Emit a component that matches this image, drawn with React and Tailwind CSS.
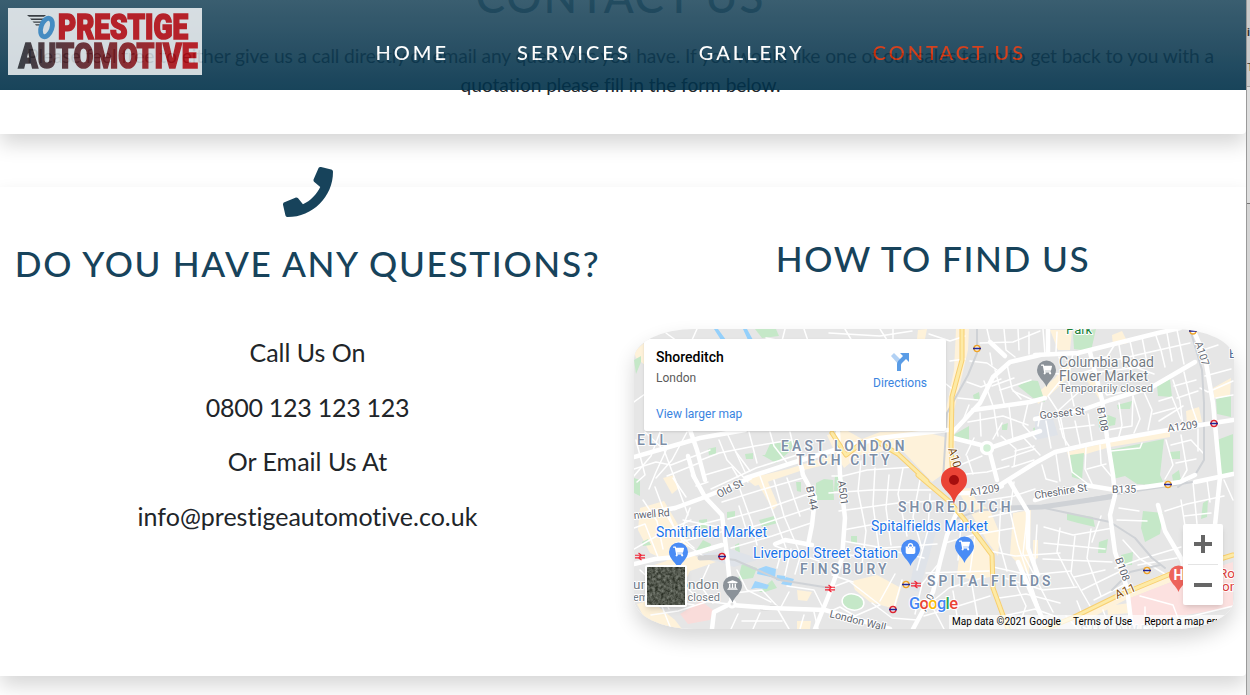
import { FaPhone, FaShoppingCart, FaShoppingBag, FaUniversity } from "react-icons/fa";

const parks = [
  "765,455 770,444 800,440 788,453 776,463 762,455", "708,449 716,447 716,454 709,455", "745,454 753,453 753,459 746,459",
  "755,329 776,329 779,336 762,338", "634,360 641,356 641,362 636,374", "1018,386 1028,380 1038,381 1045,402 1033,398",
  "973,395 979,392 980,399 974,400", "955,434 969,426 969,440 954,437", "1002,425 1008,423 1007,430 1002,430", "1033,428 1040,426 1040,437 1034,434",
  "1073,334 1096,329 1091,351 1074,349", "1157,386 1170,379 1172,397 1158,396", "1216,399 1231,395 1231,417 1217,414",
  "1117,405 1132,401 1130,409 1118,409", "1098,419 1108,415 1116,418 1115,425 1099,428", "1070,455 1084,453 1082,480 1072,477",
  "1109,450 1164,439 1160,475 1165,486 1137,484 1125,476 1113,479", "1170,452 1180,451 1180,459 1170,459", "1172,475 1179,470 1181,481 1173,481",
  "1217,440 1233,434 1233,474 1221,475", "1143,511 1163,513 1160,534 1145,542 1141,528", "1203,503 1208,500 1207,517 1201,519",
  "1067,513 1093,517 1095,527 1078,523 1067,520", "1099,542 1108,539 1106,553 1098,553", "1121,555 1133,552 1132,565 1122,565",
  "816,483 824,479 833,480 834,500 816,500", "796,482 801,482 801,492 797,491", "695,552 703,540 711,544 709,552 697,553",
  "699,520 707,519 707,529 699,528", "727,512 735,511 735,517 727,518", "738,580 742,563 757,568 753,578", "759,520 774,516 778,523 762,527",
  "759,592 772,580 777,588 765,592", "851,536 857,536 857,543 851,543", "835,475 843,478 841,491 834,491", "634,478 640,480 640,496 634,493",
  "642,542 648,539 651,545 643,546", "735,545 739,543 740,553 735,550",
];
const shops = [
  "634,352 645,342 645,365 636,358", "640,508 664,501 680,528 690,545 670,562 650,553 638,530", "648,567 688,554 716,562 690,571 682,588 650,590",
  "663,478 674,475 679,488 672,494", "746,479 788,469 830,456 832,463 800,471 755,486", "753,475 765,475 778,505 773,510",
  "827,435 846,430 862,439 880,432 921,431 948,438 949,470 932,482 899,447 876,453 860,455 844,468 836,455",
  "956,329 969,329 968,350 954,410 955,478 947,482 946,410 954,370", "918,330 927,329 925,339 917,339",
  "1050,330 1072,330 1070,350 1058,350", "1035,395 1055,378 1070,360 1071,375 1050,395 1038,404", "1067,452 1105,443 1170,431 1170,437 1110,447 1069,459",
  "1186,411 1199,407 1202,422 1187,425", "1213,388 1231,378 1230,397 1214,398", "1083,376 1098,376 1100,400 1090,385",
  "852,581 877,575 901,588 895,609 870,602 855,590", "961,540 983,539 991,558 990,577 972,580 957,575", "1013,513 1031,510 1029,575 1010,555",
  "957,489 970,488 977,502 990,510 1000,534 998,556 987,541 976,522", "1074,618 1120,592 1173,570 1174,581 1125,600 1082,623", "1107,606 1130,603 1130,613 1108,615",
  "1033,540 1038,540 1038,558 1033,560", "637,604 650,600 675,620 682,629 650,629", "797,590 812,592 807,601 798,600", "797,621 811,621 810,629 797,629",
  "1112,335 1122,331 1128,343 1113,346",
];
const minor = [
  "634,402 645,394", "636,440 645,475 637,482", "645,432 664,450 676,482 688,515", "660,432 651,456 634,476", "634,469 656,462 671,465 710,450", "668,446 656,472 649,489",
  "687,432 672,460 656,478", "667,476 699,463", "705,475 732,467 738,477", "719,440 727,460 748,482", "727,433 745,472", "749,432 757,463", "701,460 719,453 755,446 791,440",
  "770,432 774,446 788,464", "790,432 793,445 804,470", "736,452 750,471", "711,489 756,468 800,454", "722,502 764,489 803,478", "728,519 765,509 811,493",
  "728,534 762,524 811,508", "731,548 772,536 811,523", "737,481 752,523 757,545", "774,480 784,516 799,551", "787,478 800,516", "760,476 786,548",
  "739,506 746,529", "696,486 708,482", "673,478 686,497", "655,487 664,511 683,542 706,558", "643,500 657,521 663,549", "634,528 645,524 658,557",
  "634,549 662,533 691,520", "668,513 676,532 694,548", "690,508 682,529", "683,520 723,528", "671,532 722,519", "676,543 725,531", "640,570 656,585 669,609",
  "651,615 678,611 706,602", "661,604 671,629", "650,590 676,602 694,605", "687,588 701,601 730,604", "709,565 700,585 713,603", "737,570 747,590 771,602", "734,593 762,590 778,607",
  "775,546 819,561", "781,553 777,568", "791,549 785,575", "801,554 795,574", "787,586 814,590 823,608", "789,592 781,607", "778,610 789,629", "760,613 753,629",
  "738,614 731,629", "742,621 782,621", "804,615 800,629", "814,612 818,629", "832,476 843,476 867,470 914,467", "829,493 872,490 931,490", "839,511 898,503 935,501", "843,530 886,522 917,525",
  "843,541 884,548 937,544", "844,554 867,558 898,552 924,558", "832,575 853,582", "861,461 858,491 866,531 861,573", "875,468 873,505 879,549", "889,475 886,508 891,545",
  "903,468 898,494 907,536", "920,480 913,517 922,549", "930,494 928,530 917,570", "830,588 849,581 880,605 855,616 840,607 831,611", "872,603 892,618 917,620",
  "895,574 880,601", "902,580 893,611", "940,562 922,584 915,614", "929,604 949,588 985,577", "924,616 955,607 990,596", "932,606 944,629", "953,591 957,616", "972,585 978,620",
  "926,573 955,572 989,571", "945,543 973,535 1014,528", "962,514 958,560", "976,529 970,572", "988,500 1014,496 1035,489", "989,517 1030,508", "1001,499 999,542 1007,571",
  "1014,482 1010,511 1018,545 1040,611", "1028,508 1023,554 1037,580", "1037,525 1034,575 1053,612", "990,551 1015,556 1060,553", "993,567 1029,575 1071,571",
  "1005,578 1043,590 1077,587", "999,598 1026,594 1060,603", "999,617 1035,609 1057,617", "1014,580 1026,606 1018,629", "1044,527 1073,535 1113,528",
  "1044,543 1105,549", "1043,559 1112,562", "1060,528 1057,552 1074,586", "1075,536 1071,573 1090,606", "1091,529 1087,558 1101,596", "1101,516 1092,542",
  "1074,577 1105,570", "1082,590 1121,571", "1094,600 1124,585", "1119,508 1139,511", "1117,520 1147,521", "1123,540 1140,559 1165,574", "1115,568 1141,559 1181,547",
  "1138,565 1177,558", "1181,500 1185,526", "1193,482 1197,524", "1207,480 1210,502", "1165,511 1187,504 1224,496", "1184,516 1211,513", "1224,480 1233,500",
  "1140,596 1173,605 1182,629", "1103,610 1110,629", "1077,601 1088,629", "1066,616 1078,629", "1145,607 1145,629", "1180,619 1233,606",
  "980,343 1013,342 1040,331", "987,329 990,342", "1004,329 1006,350 1015,357", "1018,329 1019,350", "1029,332 1029,354", "1043,329 1045,355", "1057,332 1056,352",
  "970,361 987,363 997,370", "990,353 992,365", "967,382 981,387 1001,379", "958,398 978,400", "969,405 962,423", "984,381 993,406", "995,370 1005,407", "1007,364 1012,389 1021,399",
  "992,386 1014,378", "1000,390 1031,380", "1013,391 1035,401", "980,413 981,436", "994,409 998,436", "1009,406 1013,440", "1028,403 1023,425 1036,439", "1042,403 1038,426",
  "968,422 1003,416 1028,425", "966,455 974,438", "960,465 982,456", "956,475 987,472 1009,466", "967,456 973,474", "993,439 1002,423", "1001,436 1016,449 1014,466",
  "1022,436 1040,455", "1015,451 1034,446", "1002,460 1035,449", "1012,467 1034,460", "1048,373 1074,375 1092,370", "1059,357 1065,375 1048,396 1061,416",
  "1073,353 1068,378 1074,406", "1081,390 1059,410 1066,445", "1087,359 1107,357 1115,344", "1091,373 1140,367", "1097,383 1107,395 1128,391",
  "1119,345 1122,362 1154,374", "1130,341 1135,364", "1142,337 1147,363", "1155,333 1161,350 1165,367", "1167,333 1172,361", "1177,330 1184,364", "1115,360 1159,350 1190,343",
  "1075,421 1080,444", "1088,414 1092,440", "1058,417 1063,437 1069,446", "1046,421 1051,448", "1060,429 1094,425", "1101,431 1132,426 1133,396", "1119,403 1122,425 1118,440",
  "1133,396 1140,419 1134,433", "1144,392 1152,410 1148,430", "1159,401 1172,397 1181,419", "1159,421 1183,406", "1173,380 1180,401 1183,427", "1184,372 1192,407 1198,424",
  "1153,414 1175,408", "1174,386 1196,380", "1177,398 1198,391", "1200,388 1208,392 1233,381", "1205,376 1231,369", "1216,398 1233,395", "1203,350 1218,345",
  "1042,465 1046,479 1057,482", "1056,454 1060,481", "1068,450 1072,472 1088,484", "1086,447 1085,469 1094,488", "1100,445 1101,464 1112,477", "1087,469 1106,464",
  "1111,451 1140,448 1142,443", "1166,440 1173,465 1165,479", "1171,445 1191,440 1203,453", "1176,463 1196,459", "1181,435 1187,470 1180,482", "1198,429 1198,451",
  "640,336 655,349", "666,333 677,341", "697,329 692,340", "785,329 782,341 766,338", "804,329 808,341", "829,333 880,336 912,331", "845,329 852,341", "880,329 887,340",
  "893,329 893,341", "929,334 950,341 965,336", "950,361 965,359", "946,384 955,391",
];
const major = [
  "690,430 697,450 705,480", "634,457 669,447 700,438 745,430", "746,478 792,463 838,449 880,438 948,430",
  "675,508 705,497 750,478", "634,517 652,512 675,508", "693,475 705,497 722,515 727,555 732,605", "688,456 694,477",
  "803,475 815,497 812,525 808,545", "796,442 803,475", "838,432 840,475 845,518 842,558 830,592 815,629", "732,605 770,608 825,610 890,629",
  "732,603 714,612 712,629", "634,564 655,559 686,556 722,545", "1040,355 1010,362 993,377 980,403 953,432", "973,410 1030,402 1045,398",
  "953,438 985,446", "987,449 1040,431", "990,453 997,480", "1035,355 1078,353 1118,343 1158,333 1180,328", "1193,329 1205,357 1213,403 1220,477 1215,525",
  "1035,419 1085,409 1110,400 1152,387 1195,362", "1000,485 1035,463 1055,452 1095,443 1168,430 1233,420", "1090,352 1102,400 1107,437 1113,475 1115,495 1110,515 1115,552 1127,588 1132,629",
  "1035,500 1085,485 1115,490 1145,487 1180,482 1195,475", "1158,505 1165,531 1182,560 1188,590", "957,512 947,535 940,562 933,592 913,629", "957,493 980,493 1002,486",
  "1010,482 1028,512 1028,548 1038,575", "1048,329 1048,354", "1233,474 1195,482", "990,342 1005,356", "1018,562 1045,625 1049,629", "775,544 785,540 812,545",
];

function Lines({ list, color, width }) {
  return (
    <g fill="none" stroke={color} strokeWidth={width} strokeLinejoin="round" strokeLinecap="round">
      {list.map((p) => <polyline key={p} points={p} />)}
    </g>
  );
}

function Label({ x, y, children, size = 12, color = "#5f6670", spacing = 0, weight = 400, rotate = 0, length, halo = "#ffffff" }) {
  return (
    <text x={x} y={y} fontSize={size} fill={color} fontWeight={weight} letterSpacing={spacing} textLength={length}
      transform={`rotate(${rotate} ${x} ${y})`} stroke={halo} strokeWidth="2" strokeLinejoin="round" paintOrder="stroke">
      {children}
    </text>
  );
}

function Pin({ x, y, color, icon: Icon, letter }) {
  return (
    <g>
      <path d={`M${x} ${y + 17}C${x - 2} ${y + 11} ${x - 9.5} ${y + 7} ${x - 9.5} ${y}A9.5 9.5 0 1 1 ${x + 9.5} ${y}C${x + 9.5} ${y + 7} ${x + 2} ${y + 11} ${x} ${y + 17}Z`} fill={color} />
      {Icon && <Icon x={x - 5.5} y={y - 6} size={11} color="#fff" />}
      {letter && <text x={x - 5} y={y + 5} fontSize="14" fontWeight="700" fill="#fff">{letter}</text>}
    </g>
  );
}

function Tube({ x, y, ring = "#dc2430" }) {
  return (
    <g>
      <circle cx={x} cy={y} r="3" fill="#fff" stroke={ring} strokeWidth="1.4" />
      <rect x={x - 4} y={y - 0.8} width="8" height="1.6" fill="#25258f" />
    </g>
  );
}

function Rail({ x, y }) {
  return <path d={`M${x - 5} ${y - 1.3}h10M${x - 5} ${y + 1.4}h10M${x - 1.5} ${y - 3.5}l3 2.2l-3 2.7l3 2.1`} stroke="#ef2436" strokeWidth="1.1" fill="none" />;
}

function StreetMap() {
  return (
    <svg className="block h-full w-full" viewBox="634 329 600 300" fontFamily="Roboto, sans-serif" aria-label="Map of Shoreditch">
      <rect x="634" y="329" width="600" height="300" fill="#e6e6e6" />
      {shops.map((p) => <polygon key={p} points={p} fill="#fef2da" />)}
      {parks.map((p) => <polygon key={p} points={p} fill="#c5e8c8" />)}
      <path d="M1035 415l18 4 5 16-23 5zM700 555l30-6 30 10-26 8zM918 545l12-15 6 2-17 60-10-3z" fill="#dfe3e9" />
      <polygon points="1130,598 1174,581 1233,562 1233,607 1180,616 1134,629" fill="#fce1e0" />
      <polygon points="680,614 701,601 713,610 710,620 688,624" fill="#f9dcda" />
      <ellipse cx="853" cy="602" rx="11" ry="8" fill="#c5e8c8" stroke="#fff" strokeWidth="1.5" transform="rotate(12 853 602)" />
      <path d="M714 329l4 0 8 11h-5zM743 329h4l6 11h-5z" fill="#94d0fb" />
      <path d="M758 569l8-3 10 3-1 9-18-4zM777 575l8 1v6l-9-2zM786 577l8 2-3 7-10-2zM751 589l4-8 14 4-2 4-11-1z" fill="#9fd4fb" />
      <Lines list={minor} color="#ffffff" width={1.5} />
      <Lines list={["977,329 977,353 968,375 947,413 943,480", "1190,329 1202,370 1204,403 1204,460 1195,475 1178,487", "705,556 735,560 780,580 830,588", "955,519 980,510 1040,508 1110,495 1175,485 1233,475", "1035,506 1110,522 1135,538 1152,558 1165,568", "1112,590 1130,572 1160,565"]} color="#cfd2d6" width={2} />
      <Lines list={["1008,508 1042,507 1110,497"]} color="#cfd2d6" width={5} />
      <Lines list={["700,558 722,557", "762,608 776,608"]} color="#d3d3d3" width={5} />
      <Lines list={major} color="#ffffff" width={4.5} />
      <Lines list={["962,329 962,360 952,397 951,447 954,492", "918,475 950,502 977,535 992,555 993,588 1008,629", "876,441 898,454 927,481", "832,433 846,455 863,442", "1045,629 1072,618 1115,597 1168,575 1233,555"]} color="#f8cf70" width={5} />
      <Lines list={["962,329 962,360 952,397 951,447 954,492", "918,475 950,502 977,535 992,555 993,588 1008,629", "876,441 898,454 927,481", "832,433 846,455 863,442", "1045,629 1072,618 1115,597 1168,575 1233,555"]} color="#fdeaa6" width={3} />
      <circle cx="987" cy="448" r="5.5" fill="#d2efd6" stroke="#fff" strokeWidth="3.5" />
      <circle cx="732" cy="604" r="3" fill="#e4e4e4" stroke="#fff" strokeWidth="3" />

      <Label x={637} y={445} size={14} weight={500} color="#7d8ea6" length={30}>ELL</Label>
      <Label x={781} y={451} size={13.8} weight={600} color="#7d8ea6" length={123.5}>EAST LONDON</Label>
      <Label x={796} y={465} size={13.8} weight={600} color="#7d8ea6" length={93.5}>TECH CITY</Label>
      <Label x={898} y={512} size={13.8} weight={600} color="#7d8ea6" length={112.5}>SHOREDITCH</Label>
      <Label x={800} y={574} size={13.8} weight={600} color="#7d8ea6" length={86.5}>FINSBURY</Label>
      <Label x={927} y={586} size={13.8} weight={600} color="#7d8ea6" length={123.5}>SPITALFIELDS</Label>
      <Label x={1080} y={634} size={13} weight={500} color="#aab3c2" length={88}>SHADWELL</Label>
      <Label x={1059} y={367} size={14} color="#747b83" length={95}>Columbia Road</Label>
      <Label x={1059} y={381} size={14} color="#747b83" length={89}>Flower Market</Label>
      <Label x={1059} y={391.5} size={11} color="#747b83" length={94}>Temporarily closed</Label>
      <Label x={1066} y={333.5} size={13} color="#188038">Park</Label>
      <Label x={656} y={537} size={14} color="#1a73e8" length={111}>Smithfield Market</Label>
      <Label x={753} y={558} size={14} color="#1a73e8" length={145}>Liverpool Street Station</Label>
      <Label x={871} y={531} size={14} color="#1a73e8" length={117}>Spitalfields Market</Label>
      <Label x={633} y={589} size={13.5} color="#747b83" length={86}>um of London</Label>
      <Label x={633} y={601} size={11} color="#747b83" length={87}>emporarily closed</Label>
      <Label x={719} y={498} size={10.5} rotate={-27}>Old St</Label>
      <Label x={634} y={519} size={10.5} rotate={-5} length={36}>nwell Rd</Label>
      <Label x={806} y={487} size={10.5} rotate={78}>B144</Label>
      <Label x={838} y={481} size={10.5} rotate={83}>A501</Label>
      <Label x={829} y={617} size={10.5} rotate={14}>London Wall</Label>
      <Label x={948} y={449} size={11.5} rotate={73} color="#754b12">A10</Label>
      <Label x={926} y={612} size={10} rotate={-62}>A10</Label>
      <Label x={970} y={496} size={10.5} rotate={-9}>A1209</Label>
      <Label x={1035} y={499} size={10.5} rotate={-9}>Cheshire St</Label>
      <Label x={1112} y={493} size={10.5} rotate={-1}>B135</Label>
      <Label x={1040} y={419} size={10.5} rotate={-6}>Gosset St</Label>
      <Label x={1097} y={408} size={10.5} rotate={80}>B108</Label>
      <Label x={1115} y={559} size={10.5} rotate={70}>B108</Label>
      <Label x={1168} y={432} size={10.5} rotate={-8}>A1209</Label>
      <Label x={1195} y={343} size={10.5} rotate={72}>A107</Label>
      <Label x={1117} y={599} size={12} rotate={-23} color="#84500f">A11</Label>
      <Label x={1229} y={358} size={13} color="#53709c">E</Label>
      <Label x={1219} y={578} size={13.5} color="#dd413c">Royal</Label>
      <Label x={1222} y={591} size={13.5} color="#dd413c">ondon</Label>

      <Tube x={977} y={348.5} ring="#eea52c" /><Tube x={1193} y={331} ring="#eea52c" /><Tube x={1214} y={423.5} />
      <Tube x={1168} y={484.5} ring="#eea52c" /><Tube x={1147} y={570.5} ring="#eea52c" /><Tube x={722} y={556.5} />
      <Tube x={906} y={584.5} ring="#eea52c" /><Tube x={893} y={609.5} />
      <Rail x={640} y={556.5} /><Rail x={830} y={588.5} /><Rail x={916} y={584.5} />
      <Pin x={678.5} y={552} color="#4a8cf5" icon={FaShoppingCart} />
      <Pin x={910.5} y={549} color="#4a8cf5" icon={FaShoppingBag} />
      <Pin x={964.5} y={546} color="#4a8cf5" icon={FaShoppingCart} />
      <Pin x={1046.5} y={370} color="#8b9299" icon={FaShoppingCart} />
      <Pin x={732.5} y={585.5} color="#8b9299" icon={FaUniversity} />
      <Pin x={1178.5} y={575} color="#ed635b" letter="H" />
      <path d="M954 504.5C952 491 941 491 941 480a13 13 0 0 1 26 0C967 491 956 491 954 504.5Z" fill="#ea4335" />
      <circle cx="954" cy="480" r="5" fill="#a50e0e" />
      <g fontSize="16.5" fontWeight="500" fontFamily="Roboto" stroke="#fff" strokeWidth="2" paintOrder="stroke">
        <text x="909" y="609" textLength="49">
          <tspan fill="#4285f4">G</tspan><tspan fill="#ea4335">o</tspan><tspan fill="#fbbc05">o</tspan><tspan fill="#4285f4">g</tspan><tspan fill="#34a853">l</tspan><tspan fill="#ea4335">e</tspan>
        </text>
      </g>
    </svg>
  );
}

function Logo() {
  return (
    <svg className="block h-[67px] w-[194px]" viewBox="8 8 194 67" aria-label="Prestige Automotive">
      <defs>
        <linearGradient id="word" gradientUnits="userSpaceOnUse" x1="18" x2="185" y1="0" y2="0">
          <stop offset="0" stopColor="#262c33" /><stop offset="1" stopColor="#ae0b13" />
        </linearGradient>
      </defs>
      <rect x="8" y="8" width="194" height="67" fill="#fff" fillOpacity="0.8" />
      <path d="M27 15h19l-2 1.800H29zM30 18.500h14l-1 1.500H31.500zM32.500 21.500h9l-.7 1.300h-7zM35 24.300h5l-.5 1.200h-3.500z" fill="#252b31" />
      <ellipse cx="46.500" cy="27.500" rx="5.400" ry="9.600" transform="rotate(19 46.500 27.500)" fill="none" stroke="#3180bc" strokeWidth="4.800" />
      <g fontFamily="Roboto, sans-serif" fontWeight="900" strokeWidth="1.700" strokeLinejoin="miter">
        <text x="58" y="39" fontSize="34.500" fill="#ae0b13" stroke="#ae0b13" textLength="130" lengthAdjust="spacingAndGlyphs">PRESTIGE</text>
        <text x="18.500" y="67.500" fontSize="35" fill="url(#word)" stroke="url(#word)" textLength="179" lengthAdjust="spacingAndGlyphs">AUTOMOTIVE</text>
      </g>
    </svg>
  );
}

function Header() {
  return (
    <header className="absolute inset-x-0 top-0 z-10 flex h-[90px] bg-linear-to-b from-[#254d61] to-[#003049] opacity-90">
      <div className="pt-2 pl-2"><Logo /></div>
      <nav className="ml-[173.5px] flex gap-[68px] pt-[37px] text-[20px] leading-[31px] font-medium tracking-[3px] whitespace-nowrap text-white">
        <a>HOME</a>
        <a>SERVICES</a>
        <a>GALLERY</a>
        <a className="text-[#d12d06]">CONTACT US</a>
      </nav>
    </header>
  );
}

function PlaceCard() {
  return (
    <div className="absolute top-[10px] left-[10px] flex h-[92px] w-[302px] justify-between rounded-xs bg-white pt-[10px] pr-[19px] pl-3 shadow-sm">
      <div className="flex flex-col text-xs">
        <b className="text-sm leading-4 font-medium text-black">Shoreditch</b>
        <span className="mt-[5px] leading-4 text-[#5b5b5b]">London</span>
        <a className="mt-5 leading-4 text-[#3a84df]">View larger map</a>
      </div>
      <div className="flex flex-col items-center pt-[3px] text-xs text-[#3a84df]">
        <svg className="h-5 w-5" viewBox="0 0 20 20">
          <path d="M1 4l3-3 8 8-3 4z" fill="#b2d1f4" />
          <path d="M7 19v-7q0-2 1.500-3.500L13 4l-3-3h9v9l-3-3-4 4q-1 1-1 2v6z" fill="#5a9ce6" />
        </svg>
        <span className="mt-[3px] leading-4">Directions</span>
      </div>
    </div>
  );
}

function MapFrame() {
  return (
    <div className="relative h-[300px] w-[600px] overflow-hidden rounded-[10%] font-[Roboto]">
      <StreetMap />
      <PlaceCard />
      <div className="absolute bottom-[22px] left-[11px] h-[42px] w-[42px] rounded-xs border-2 border-white bg-[#4c5049] shadow-md">
        <svg className="h-full w-full" viewBox="0 0 38 38">
          <filter id="ground" colorInterpolationFilters="sRGB"><feTurbulence type="fractalNoise" baseFrequency="0.35" numOctaves="3" seed="4" /><feColorMatrix values=".5 0 0 0 .07 .5 0 0 0 .09 .5 0 0 0 .05 0 0 0 0 1" /></filter>
          <rect width="38" height="38" filter="url(#ground)" />
        </svg>
      </div>
      <div className="absolute right-[11px] bottom-6 flex h-[81px] w-10 flex-col items-center rounded-xs bg-white shadow-md">
        <svg className="h-10 w-10" viewBox="0 0 40 40"><path d="M11 20h18M20 11v18" stroke="#666" strokeWidth="4" /></svg>
        <span className="h-px w-[30px] bg-[#e4e4e4]" />
        <svg className="h-10 w-10" viewBox="0 0 40 40"><path d="M11 20h18" stroke="#666" strokeWidth="4" /></svg>
      </div>
      <div className="absolute right-0 bottom-0 flex h-[14px] w-[285px] gap-3 bg-white/70 pl-[3px] text-[10px] leading-[14px] whitespace-nowrap text-black">
        <span>Map data ©2021 Google</span>
        <span>Terms of Use</span>
        <span className="w-[73px] overflow-hidden">Report a map error</span>
      </div>
    </div>
  );
}

export default function App() {
  return (
    <div className="flex h-[695px] w-[1250px] overflow-hidden bg-white font-[Lato] text-[#212529] [font-variant-ligatures:none]">
      <main className="relative h-full w-[1246px] shrink-0 overflow-hidden">
        <Header />
        <section className="flex h-[134px] flex-col items-center rounded-br-[4px] bg-white pr-[5px] text-center shadow-[0_10px_20px_rgba(0,0,0,0.16)]">
          <h1 className="-mt-[34px] h-[76px] shrink-0 text-[44px] leading-[60px] font-medium tracking-[1.8px] text-[#17435b]">CONTACT US</h1>
          <p className="w-[1240px] text-[19.2px] leading-[28.8px] tracking-[-0.08px]">
            Please feel free to either give us a call directly or email any questions you have. If you would like one of our sales team to get back to you with a<br />quotation please fill in the form below.
          </p>
        </section>
        <section className="mt-[53px] flex h-[489px] rounded-br-[4px] bg-white shadow-[0_10px_20px_rgba(0,0,0,0.16)]">
          <div className="-mt-5 flex w-[615px] flex-col items-center">
            <FaPhone className="h-[50px] w-[50px] text-[#17435b]" />
            <h2 className="mt-[19px] text-[35.2px] leading-[54px] font-medium tracking-[1.65px] whitespace-nowrap text-[#17435b]">DO YOU HAVE ANY QUESTIONS?</h2>
            <div className="mt-[43px] flex flex-col gap-[16.2px] text-center text-[25px] leading-[38.4px]">
              <p>Call Us On</p>
              <p className="tracking-[-0.25px]">0800 123 123 123</p>
              <p>Or Email Us At</p>
              <p>info@prestigeautomotive.co.uk</p>
            </div>
          </div>
          <div className="ml-[18px] flex w-[600px] flex-col items-center pt-11">
            <h2 className="text-[35.2px] leading-[54px] font-medium tracking-[1.5px] whitespace-nowrap text-[#17435b]">HOW TO FIND US</h2>
            <div className="mt-11 translate-x-px rounded-[10%] shadow-[0_10px_20px_rgba(0,0,0,0.16)]"><MapFrame /></div>
          </div>
        </section>
      </main>
      <aside className="flex w-1 flex-col overflow-hidden border-l border-[#9a9a9a] bg-[#d4d4d4] font-[Roboto] text-[11px] leading-[14px] text-[#333]">
        <div className="h-[87px] shrink-0 border-b border-[#a0a0a0] bg-[#cbcbcb] pt-[26px]">
          <p className="h-[35px] font-bold">i</p>
          <p>T</p>
        </div>
        <div className="h-[117px] shrink-0 border-b border-[#777] bg-[#dedede]" />
      </aside>
    </div>
  );
}
